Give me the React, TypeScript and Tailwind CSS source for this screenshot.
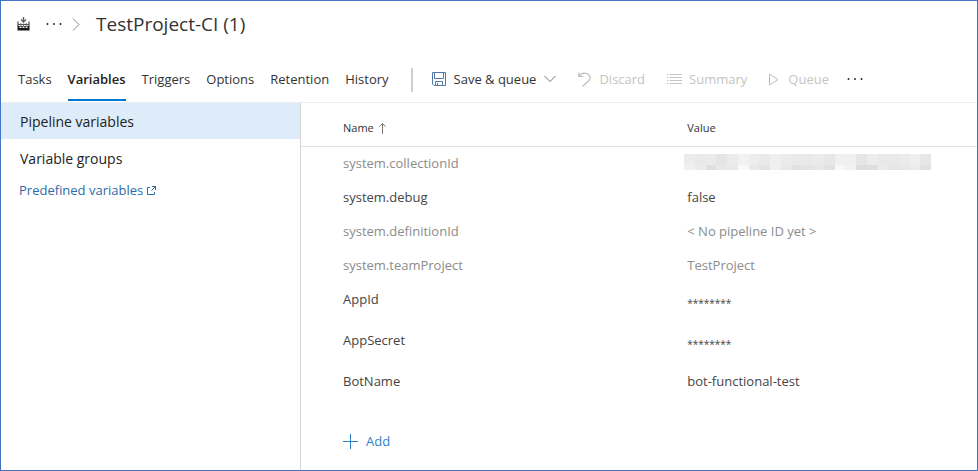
import React from "react";

const tabs = ["Tasks", "Variables", "Triggers", "Options", "Retention", "History"];

const rows = [
  { name: "system.collectionId", value: "", system: true, dim: true, masked: true },
  { name: "system.debug", value: "false", system: true, dim: false },
  { name: "system.definitionId", value: "< No pipeline ID yet >", system: true, dim: true },
  { name: "system.teamProject", value: "TestProject", system: true, dim: true },
  { name: "AppId", value: "********", secret: true },
  { name: "AppSecret", value: "********", secret: true },
  { name: "BotName", value: "bot-functional-test" },
];

const maskTop = [
  "#ececec", "#e9e9e9", "#ebebeb", "#e5e5e5", "#ebebeb", "#f2f2f2", "#ededed", "#e9e9e9", "#efefef", "#ebebeb", "#e9e9e9", "#e9e9e9",
  "#ebebeb", "#e7e7e7", "#f0f0f0", "#f0f0f0", "#e5e5e5", "#ececec", "#e9e9e9", "#e9e9e9", "#ebebeb", "#efefef", "#e7e7e7",
];
const maskBottom = [
  "#f0f0f0", "#ebebeb", "#e0e0e0", "#e8e8e8", "#e8e8e8", "#f9f9f9", "#e9e9e9", "#e4e4e4", "#efefef", "#e8e8e8", "#e1e1e1", "#e4e4e4",
  "#e7e7e7", "#e2e2e2", "#f8f8f8", "#f2f2f2", "#dedede", "#dedede", "#ebebeb", "#e5e5e5", "#e7e7e7", "#ebebeb", "#e1e1e1",
];

function Mask() {
  return (
    <div className="-ml-[3px] w-[247px] pt-px" role="img" aria-label="Hidden value">
      <div className="flex h-[11px]">
        {maskTop.map((c, i) => (
          <span key={i} className="flex-1" style={{ backgroundColor: c }} />
        ))}
      </div>
      <div className="flex h-[5px]">
        {maskBottom.map((c, i) => (
          <span key={i} className="flex-1" style={{ backgroundColor: c }} />
        ))}
      </div>
    </div>
  );
}

function BuildIcon() {
  return (
    <svg width="13" height="14" viewBox="0 0 13 14" aria-hidden="true">
      <path d="M6.500 0V4.500" stroke="#5f5a55" strokeWidth="1.400" />
      <path d="M4 2.500L6.500 5L9 2.500" fill="none" stroke="#5f5a55" strokeWidth="1.300" />
      <path d="M1 4.500V9M12 4.500V9" stroke="#444" strokeWidth="1.200" />
      <path d="M3.750 6V9M9.250 6V9M6.500 6.500V9" stroke="#888" strokeWidth="1.200" />
      <path d="M1 7.500H12" stroke="#555" strokeWidth="1" />
      <path d="M0.500 9H12.500V13.500H0.500Z" fill="#161616" />
      <path d="M2.500 9.500h2v1.500h-2zM5.500 9.500h2v1.500h-2zM8.500 9.500h2v1.500h-2z" fill="#f4f4f4" />
    </svg>
  );
}

function Dots() {
  return (
    <svg width="16" height="4" viewBox="0 0 16 4" fill="#1f1f1f" aria-hidden="true">
      <circle cx="1.500" cy="2" r="0.950" />
      <circle cx="8" cy="2" r="0.950" />
      <circle cx="14.500" cy="2" r="0.950" />
    </svg>
  );
}

function SaveIcon() {
  return (
    <svg width="14" height="14" viewBox="0 0 14 14" fill="none" stroke="#5479a6" aria-hidden="true">
      <path d="M0.500 0.500H13.500V13.500H2L0.500 12Z" />
      <path d="M2.500 0.500V6.500H11.500V0.500" />
      <path d="M3.500 13.500V9.500H10.500V13.500M5.500 11V13.500" />
    </svg>
  );
}

export default function App() {
  return (
    <div className="flex min-h-screen flex-col border border-[#4472c4] bg-white font-['Open_Sans','Noto_Sans',sans-serif] text-[13px] leading-5 text-[#333]">
      <header className="flex h-[46px] items-center pl-4">
        <BuildIcon />
        <button type="button" aria-label="More" className="ml-4">
          <Dots />
        </button>
        <svg width="8" height="13" viewBox="0 0 8 13" fill="none" stroke="#8a8a8a" className="ml-[10px]" aria-hidden="true">
          <path d="M1 0.500L7 6.500L1 12.500" />
        </svg>
        <h1 className="ml-4 text-[19px] leading-6">TestProject-CI (1)</h1>
      </header>

      <div className="flex h-[55px] items-stretch whitespace-nowrap pl-[17px]">
        <nav className="mb-px flex gap-4">
          {tabs.map((t) => (
            <a
              key={t}
              href="#"
              className={
                t === "Variables"
                  ? "border-b-2 border-[#0078d4] pt-[22px] font-semibold text-[#222]"
                  : "border-b-2 border-transparent pt-[22px]"
              }
            >
              {t}
            </a>
          ))}
        </nav>
        <div className="ml-[22px] mt-[21px] h-6 w-0.5 bg-[#cfcfcf]" />
        <div className="ml-[19px] mt-[22px] flex h-5 items-center">
          <button type="button" className="flex items-center gap-2">
            <SaveIcon />
            Save &amp; queue
            <svg width="12" height="8" viewBox="0 0 12 8" fill="none" stroke="#777" aria-hidden="true">
              <path d="M0.500 1L6 6.500L11.500 1" />
            </svg>
          </button>
          <button type="button" disabled className="ml-[22px] flex items-center gap-2 text-[#c4c4c4]">
            <svg width="13" height="15" viewBox="0 0 13 15" fill="none" stroke="#bdbdbd" strokeWidth="1.200" aria-hidden="true">
              <path d="M0.800 0.500V4.500H5.500M1 4.300C3 1.500 6 0.500 9 1.500C12.500 3 13 6.500 10.500 9L4.500 14.500" />
            </svg>
            Discard
          </button>
          <button type="button" disabled className="ml-[22px] flex items-center gap-[7px] text-[#c4c4c4]">
            <svg width="15" height="12" viewBox="0 0 15 12" stroke="#c4c4c4" aria-hidden="true">
              <path d="M0 1.500H1.500M3 1.500H15M0 4.500H1.500M3 4.500H15M0 7.500H1.500M3 7.500H15M0 10.500H1.500M3 10.500H15" />
            </svg>
            Summary
          </button>
          <button type="button" disabled className="ml-[22px] flex items-center gap-[9px] text-[#c4c4c4]">
            <svg width="10" height="13" viewBox="0 0 10 13" fill="none" stroke="#bdbdbd" aria-hidden="true">
              <path d="M0.500 1V12L9 6.500Z" />
            </svg>
            Queue
          </button>
          <button type="button" aria-label="More actions" className="ml-[18px]">
            <Dots />
          </button>
        </div>
      </div>

      <div className="flex flex-1 border-t border-[#eee]">
        <aside className="w-[300px] shrink-0 border-r border-[#d6d6d6]">
          <a href="#" className="flex h-9 items-center bg-[#deebf9] pl-[19px] pt-0.5 text-[14px] text-[#222]">
            Pipeline variables
          </a>
          <a href="#" className="flex h-10 items-center pl-[19px] text-[14px] text-[#222]">
            Variable groups
          </a>
          <a href="#" className="flex h-[22px] items-center gap-1 pl-[18px] text-[#2c6ca8]">
            Predefined variables
            <svg width="9" height="9" viewBox="0 0 9 9" fill="none" stroke="currentColor" aria-hidden="true">
              <path d="M3 1.500H0.500V8.500H7.500V6M5 0.500H8.500V4M8.500 0.500L4.500 4.500" />
            </svg>
          </a>
        </aside>
        <main className="min-w-0 flex-1">
          <table className="w-full table-fixed border-separate border-spacing-0 text-left">
            <thead className="text-[11px]">
              <tr className="h-11 align-middle">
                <th scope="col" className="w-4/7 border-b border-[#e2e2e2] pl-[42px] pt-[7px] font-normal">
                  <span className="flex items-center gap-[5px]">
                    Name
                    <svg width="7" height="11" viewBox="0 0 7 11" fill="none" stroke="#777" aria-hidden="true">
                      <path d="M3.500 11V0.500M0.500 3.500L3.500 0.500L6.500 3.500" />
                    </svg>
                  </span>
                </th>
                <th scope="col" className="border-b border-[#e2e2e2] pt-[7px] font-normal">Value</th>
              </tr>
            </thead>
            <tbody>
              {rows.map((r) => (
                <tr key={r.name} className={`align-top ${r.system ? "h-[34px]" : "h-[41px]"} ${r.dim ? "text-[#8c8c8c]" : "text-[#444]"}`}>
                  <td className="pl-[42px] pt-[6px]">{r.name}</td>
                  <td className={r.secret ? "pt-[10px] text-[10px]" : "pt-[6px]"}>{r.masked ? <Mask /> : r.value}</td>
                </tr>
              ))}
            </tbody>
          </table>
          <button type="button" className="ml-[42px] mt-[25px] flex items-center gap-2 text-[#2b7fc9]">
            <svg width="15" height="15" viewBox="0 0 15 15" stroke="currentColor" aria-hidden="true">
              <path d="M7.500 0V15M0 7.500H15" />
            </svg>
            Add
          </button>
        </main>
      </div>
    </div>
  );
}
